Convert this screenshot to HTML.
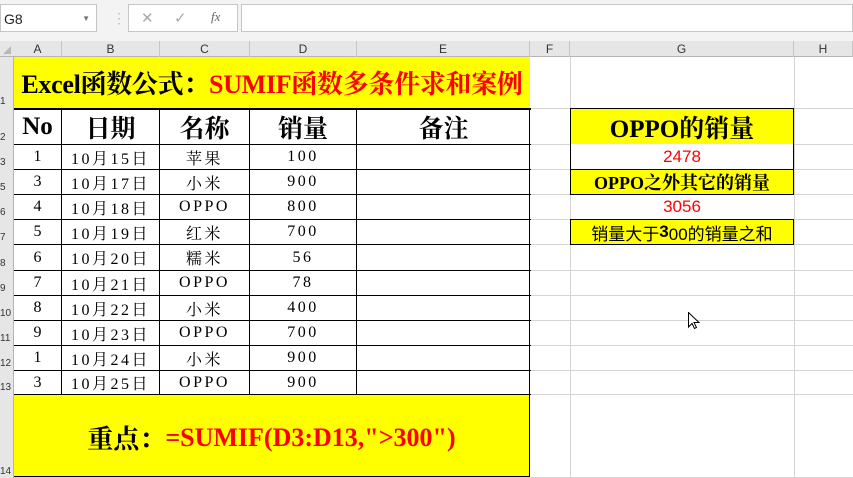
<!DOCTYPE html>
<html><head><meta charset="utf-8"><style>
*{margin:0;padding:0;box-sizing:border-box}
body{width:853px;height:478px;overflow:hidden;background:#fff;position:relative;font-family:"Liberation Serif","Noto Serif CJK SC",serif}
.a{position:absolute}
.hl{position:absolute;height:1px;background:#d4d4d4}
.vl{position:absolute;width:1px;background:#d4d4d4}
.c{position:absolute;display:flex;align-items:center;justify-content:center;white-space:nowrap}
.ch{position:absolute;top:41px;height:16px;font:12px "Liberation Sans",sans-serif;color:#333;display:flex;align-items:center;justify-content:center;border-right:1px solid #c6c6c6}
.rh{position:absolute;left:0;width:14px;font:10px "Liberation Sans",sans-serif;color:#333;display:flex;align-items:flex-end;justify-content:flex-start;padding-bottom:1px}
.d{font-size:16px;letter-spacing:2.5px;font-family:"Liberation Serif","Noto Serif CJK SC",serif}
.bk{position:absolute;background:#000}
</style></head><body>
<div class="a" style="left:0;top:0;width:853px;height:41px;background:#f3f3f3"></div>
<div class="a" style="left:0;top:4px;width:97px;height:28px;background:#fff;border:1px solid #c6c6c6;font:14px 'Liberation Sans',sans-serif;padding:6px 3px;color:#222">G8<span style="position:absolute;right:6px;top:9px;font-size:8px;color:#777">▼</span></div>
<div class="a" style="left:112px;top:10px;color:#bbb;font:14px sans-serif">⋮</div>
<div class="a" style="left:128px;top:4px;width:110px;height:28px;background:#fff;border:1px solid #c6c6c6;font:15px 'Liberation Sans',sans-serif;color:#aaa"><span class="a" style="left:12px;top:4px">✕</span><span class="a" style="left:45px;top:4px">✓</span><span class="a" style="left:82px;top:4px;font:italic 13px 'Liberation Serif',serif;color:#666">fx</span></div>
<div class="a" style="left:241px;top:4px;width:612px;height:28px;background:#fff;border:1px solid #c6c6c6"></div>
<div class="a" style="left:0;top:41px;width:853px;height:16px;background:#e6e6e6;border-bottom:1px solid #b5b5b5"></div>
<div class="a" style="left:3px;top:46px;width:0;height:0;border-left:8px solid transparent;border-bottom:8px solid #b8b8b8"></div>
<div class="ch" style="left:14px;width:48px">A</div>
<div class="ch" style="left:62px;width:98px">B</div>
<div class="ch" style="left:160px;width:90px">C</div>
<div class="ch" style="left:250px;width:107px">D</div>
<div class="ch" style="left:357px;width:173px">E</div>
<div class="ch" style="left:530px;width:40px">F</div>
<div class="ch" style="left:570px;width:224px">G</div>
<div class="ch" style="left:794px;width:59px">H</div>
<div class="a" style="left:0;top:57px;width:14px;height:421px;background:#e6e6e6;border-right:1px solid #b5b5b5"></div>
<div class="rh" style="top:57px;height:51px">1</div>
<div class="rh" style="top:108px;height:36px">2</div>
<div class="rh" style="top:144px;height:25px">3</div>
<div class="rh" style="top:169px;height:25px">5</div>
<div class="rh" style="top:194px;height:25px">6</div>
<div class="rh" style="top:219px;height:25px">7</div>
<div class="rh" style="top:244px;height:26px">8</div>
<div class="rh" style="top:270px;height:25px">9</div>
<div class="rh" style="top:295px;height:25px">10</div>
<div class="rh" style="top:320px;height:25px">11</div>
<div class="rh" style="top:345px;height:25px">12</div>
<div class="rh" style="top:370px;height:24px">13</div>
<div class="rh" style="top:394px;height:84px">14</div>
<div class="vl" style="left:570px;top:57px;height:421px"></div>
<div class="vl" style="left:794px;top:57px;height:421px"></div>
<div class="hl" style="left:530px;top:108px;width:323px"></div>
<div class="hl" style="left:530px;top:144px;width:323px"></div>
<div class="hl" style="left:530px;top:169px;width:323px"></div>
<div class="hl" style="left:530px;top:194px;width:323px"></div>
<div class="hl" style="left:530px;top:219px;width:323px"></div>
<div class="hl" style="left:530px;top:244px;width:323px"></div>
<div class="hl" style="left:530px;top:270px;width:323px"></div>
<div class="hl" style="left:530px;top:295px;width:323px"></div>
<div class="hl" style="left:530px;top:320px;width:323px"></div>
<div class="hl" style="left:530px;top:345px;width:323px"></div>
<div class="hl" style="left:530px;top:370px;width:323px"></div>
<div class="hl" style="left:530px;top:394px;width:323px"></div>
<div class="hl" style="left:14px;top:477px;width:839px"></div>
<div class="c" style="left:14px;top:57px;width:516px;height:51px;background:#ff0;font-size:26px;font-weight:bold;letter-spacing:-0.3px;overflow:hidden">Excel函数公式：<span style="color:#f00">SUMIF函数多条件求和案例</span></div>
<div class="a" style="left:14px;top:108px;width:516px;height:286px;border-right:1px solid #000"></div>
<div class="bk" style="left:14px;top:108px;width:517px;height:2px"></div>
<div class="bk" style="left:14px;top:144px;width:517px;height:1px"></div>
<div class="bk" style="left:14px;top:169px;width:517px;height:1px"></div>
<div class="bk" style="left:14px;top:194px;width:517px;height:1px"></div>
<div class="bk" style="left:14px;top:219px;width:517px;height:1px"></div>
<div class="bk" style="left:14px;top:244px;width:517px;height:1px"></div>
<div class="bk" style="left:14px;top:270px;width:517px;height:1px"></div>
<div class="bk" style="left:14px;top:295px;width:517px;height:1px"></div>
<div class="bk" style="left:14px;top:320px;width:517px;height:1px"></div>
<div class="bk" style="left:14px;top:345px;width:517px;height:1px"></div>
<div class="bk" style="left:14px;top:370px;width:517px;height:1px"></div>
<div class="bk" style="left:14px;top:394px;width:517px;height:1px"></div>
<div class="bk" style="left:61px;top:108px;width:1px;height:286px"></div>
<div class="bk" style="left:159px;top:108px;width:1px;height:286px"></div>
<div class="bk" style="left:249px;top:108px;width:1px;height:286px"></div>
<div class="bk" style="left:356px;top:108px;width:1px;height:286px"></div>
<div class="c" style="left:14px;top:109px;width:47px;height:35px;font-size:25px;font-weight:bold">No</div>
<div class="c" style="left:62px;top:109px;width:97px;height:35px;font-size:25px;font-weight:bold">日期</div>
<div class="c" style="left:160px;top:109px;width:89px;height:35px;font-size:25px;font-weight:bold">名称</div>
<div class="c" style="left:250px;top:109px;width:106px;height:35px;font-size:25px;font-weight:bold">销量</div>
<div class="c" style="left:357px;top:109px;width:173px;height:35px;font-size:25px;font-weight:bold">备注</div>
<div id="rows"></div>
<script>
var d=[[144,25,1,15,"苹果",100],[169,25,3,17,"小米",900],[194,25,4,18,"OPPO",800],[219,25,5,19,"红米",700],[244,26,6,20,"糯米",56],[270,25,7,21,"OPPO",78],[295,25,8,22,"小米",400],[320,25,9,23,"OPPO",700],[345,25,1,24,"小米",900],[370,24,3,25,"OPPO",900]];
var h="";d.forEach(function(r){var t=r[0]+1,hh=r[1]-1;
h+='<div class="c d" style="left:14px;top:'+t+'px;width:47px;height:'+hh+'px;letter-spacing:0">'+r[2]+'</div>';
h+='<div class="c d" style="left:62px;top:'+t+'px;width:97px;height:'+hh+'px">10月'+r[3]+'日</div>';
h+='<div class="c d" style="left:160px;top:'+t+'px;width:89px;height:'+hh+'px">'+r[4]+'</div>';
h+='<div class="c d" style="left:250px;top:'+t+'px;width:106px;height:'+hh+'px">'+r[5]+'</div>';});
document.getElementById("rows").innerHTML=h;
</script>
<div class="c" style="left:14px;top:395px;width:516px;height:82px;background:#ff0;border-right:1px solid #000;border-bottom:1px solid #000;font-size:26px;font-weight:bold;padding-top:4px">重点：<span style="color:#f00">=SUMIF(D3:D13,"&gt;300")</span></div>
<div class="c" style="left:570px;top:108px;width:224px;height:37px;background:#ff0;border:1px solid #000;font-size:25px;font-weight:bold">OPPO的销量</div>
<div class="c" style="left:570px;top:144px;width:224px;height:26px;background:#fff;border-left:1px solid #000;border-right:1px solid #000;font:17px 'Liberation Sans',sans-serif;color:#f00">2478</div>
<div class="c" style="left:570px;top:169px;width:224px;height:26px;background:#ff0;border:1px solid #000;font-size:18px;font-weight:bold">OPPO之外其它的销量</div>
<div class="c" style="left:570px;top:195px;width:224px;height:24px;font:17px 'Liberation Sans',sans-serif;color:#f00">3056</div>
<div class="c" style="left:570px;top:219px;width:224px;height:26px;background:#ff0;border:1px solid #000;font-size:17px;font-family:'Liberation Sans','Noto Sans CJK SC',sans-serif">销量大于<b>3</b>00的销量之和</div>
<svg class="a" style="left:688px;top:312px" width="12" height="18" viewBox="0 0 12 18"><path d="M0.5 0.5 L0.5 15 L4 11.5 L6.5 16.5 L8.5 15.5 L6 10.5 L11 10.5 Z" fill="#fff" stroke="#000" stroke-width="1"/></svg>
</body></html>
